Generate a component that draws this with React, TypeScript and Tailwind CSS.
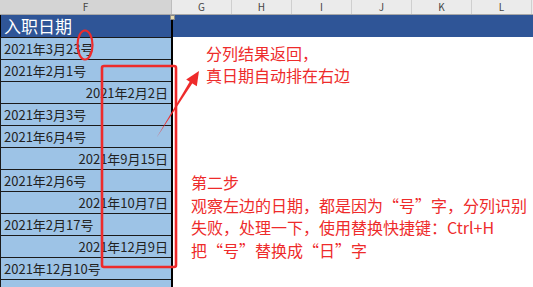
const rows: [string, 'l' | 'r'][] = [
  ['2021年3月23号', 'l'],
  ['2021年2月1号', 'l'],
  ['2021年2月2日', 'r'],
  ['2021年3月3号', 'l'],
  ['2021年6月4号', 'l'],
  ['2021年9月15日', 'r'],
  ['2021年2月6号', 'l'],
  ['2021年10月7日', 'r'],
  ['2021年2月17号', 'l'],
  ['2021年12月9日', 'r'],
  ['2021年12月10号', 'l'],
  ['', 'l'],
]

const cols = ['G', 'H', 'I', 'J', 'K', 'L']

function Annotations() {
  return (
    <svg className="absolute inset-0 pointer-events-none" width={533} height={287} viewBox="0 0 533 287">
      {/* circle round the 号 */}
      <ellipse cx={85} cy={45} rx={7.5} ry={14.5} fill="none" stroke="#EE2B2B" strokeWidth={2.2} />
      {/* rectangle round the right-aligned dates */}
      <rect x={102} y={66} width={74} height={201} rx={2} fill="none" stroke="#EE2B2B" strokeWidth={2.6} />
      {/* arrow */}
      <polygon points="157,137 190.4,80.6 193.0,82.2" fill="#EE2B2B" />
      <polygon points="199,71 186.2,79.4 196.8,86.2" fill="#EE2B2B" />
    </svg>
  )
}

export default function App() {
  return (
    <div className="relative w-[533px] h-[287px] overflow-hidden bg-white" style={{ fontFamily: '"Noto Sans CJK SC", "Noto Sans", sans-serif' }}>
      {/* Column headers */}
      <div className="flex h-[15px] bg-[#ebebeb] border-b border-[#a8a8a8] text-[10px] leading-[14px] text-[#444]">
        <div className="w-[172px] text-center bg-[#d4d4d4] border-r border-[#bdbdbd]">F</div>
        {cols.map((c) => (
          <div key={c} className="w-[60px] text-center border-r border-[#cfcfcf]">{c}</div>
        ))}
      </div>

      <div className="flex">
        {/* Column F */}
        <div className="w-[173px] shrink-0 border-r-2 border-black">
          <div className="h-[22px] bg-[#2f5597] border-l border-black flex items-end pl-[3px] pb-[1px] text-[17px] leading-[20px] text-white">
            入职日期
          </div>
          {rows.map(([t, a], i) => (
            <div
              key={i}
              className={`h-[22px] bg-[#9dc3e6] border-l border-t border-[#1a1a1a] flex items-end pb-[1px] px-[3px] text-[13px] leading-[18px] text-[#222] ${a === 'r' ? 'justify-end' : 'justify-start'}`}
            >
              {t}
            </div>
          ))}
        </div>

        {/* Right area */}
        <div className="flex-1 text-[16px] leading-[22px] text-[#ee2b2b]">
          <div className="h-[22px] bg-[#2f5597]" />
          <div className="mt-[5px] ml-[33px]">
            <div>分列结果返回，</div>
            <div>真日期自动排在右边</div>
          </div>
          <div className="mt-[85px] ml-[18px] leading-[22.5px]">
            <div>第二步</div>
            <div>观察左边的日期，都是因为“号”字，分列识别</div>
            <div>失败，处理一下，使用替换快捷键：Ctrl+H</div>
            <div>把“号”替换成“日”字</div>
          </div>
        </div>
      </div>

      {/* fill handle */}
      <div className="absolute left-[170px] top-[15px] w-[5px] h-[5px] bg-[#e8dcb0] border border-[#8a8a8a]" />
      <Annotations />
    </div>
  )
}
